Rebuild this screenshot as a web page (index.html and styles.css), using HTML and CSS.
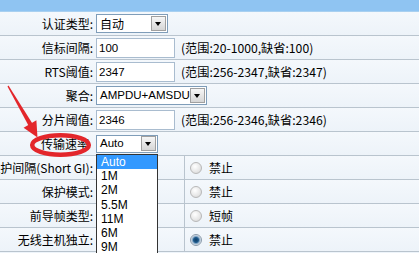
FILE: index.html
```html
<!DOCTYPE html>
<html>
<head>
<meta charset="utf-8">
<link rel="stylesheet" href="styles.css">
</head>
<body>
<div class="page">
  <div class="topbar"></div>
  <div class="row">
    <div class="label"><span>认证类型:</span></div>
    <div class="field"><div class="select s-auth"><span class="val cjk">自动</span><span class="btn"></span></div></div>
  </div>
  <div class="row">
    <div class="label"><span>信标间隔:</span></div>
    <div class="field"><div class="input">100</div><span class="hint">(范围:20-1000,缺省:100)</span></div>
  </div>
  <div class="row">
    <div class="label"><span>RTS阈值:</span></div>
    <div class="field"><div class="input">2347</div><span class="hint">(范围:256-2347,缺省:2347)</span></div>
  </div>
  <div class="row">
    <div class="label"><span>聚合:</span></div>
    <div class="field"><div class="select s-agg"><span class="val">AMPDU+AMSDU</span><span class="btn"></span></div></div>
  </div>
  <div class="row">
    <div class="label"><span>分片阈值:</span></div>
    <div class="field"><div class="input">2346</div><span class="hint">(范围:256-2346,缺省:2346)</span></div>
  </div>
  <div class="row">
    <div class="label label-nocolon"><span>传输速率</span></div>
    <div class="field"><div class="select s-rate"><span class="val">Auto</span><span class="btn"></span></div></div>
  </div>
  <div class="row radio-row">
    <div class="label"><span>保护间隔(Short GI):</span></div>
    <div class="mid"></div>
    <div class="opt"><span class="radio"></span><span class="opt-text">禁止</span></div>
  </div>
  <div class="row radio-row">
    <div class="label"><span>保护模式:</span></div>
    <div class="mid"></div>
    <div class="opt"><span class="radio"></span><span class="opt-text">禁止</span></div>
  </div>
  <div class="row radio-row">
    <div class="label"><span>前导帧类型:</span></div>
    <div class="mid"></div>
    <div class="opt"><span class="radio"></span><span class="opt-text">短帧</span></div>
  </div>
  <div class="row radio-row">
    <div class="label"><span>无线主机独立:</span></div>
    <div class="mid"></div>
    <div class="opt"><span class="radio checked"></span><span class="opt-text">禁止</span></div>
  </div>

  <ul class="listbox">
    <li class="sel">Auto</li>
    <li>1M</li>
    <li>2M</li>
    <li>5.5M</li>
    <li>11M</li>
    <li>6M</li>
    <li>9M</li>
  </ul>

  <svg class="mark" width="419" height="253" viewBox="0 0 419 253">
    <polygon points="8.5,85.6 7.5,86.4 28.6,125.8 32.4,123.6" fill="#e3262b"/>
    <polygon points="37.5,137.5 23.6,127.8 36.4,120.2" fill="#e3262b"/>
    <ellipse cx="60.5" cy="145" rx="28.3" ry="9.8" fill="none" stroke="#e3262b" stroke-width="4.5"/>
  </svg>
</div>
</body>
</html>
```

FILE: styles.css
```css
html, body {
  margin: 0;
  padding: 0;
  background: #eef4fa;
}
.page {
  position: relative;
  width: 419px;
  height: 253px;
  overflow: hidden;
  font-family: "Noto Sans CJK SC", "Liberation Sans", sans-serif;
  font-size: 12px;
  color: #000;
}
.topbar {
  height: 11px;
  background: #8fc4f2;
  border-bottom: 1px solid #a9d0f0;
}
.row {
  display: flex;
  align-items: center;
  height: 23px;
  border-bottom: 1px solid #b9c4ce;
  background: linear-gradient(#f4f8fc, #edf3f9);
}
.label {
  flex: 0 0 95px;
  width: 95px;
  box-sizing: border-box;
  padding-right: 2px;
  display: flex;
  justify-content: flex-end;
  overflow: hidden;
  white-space: nowrap;
  line-height: 23px;
}
.label span {
  flex: none;
}
.label-nocolon {
  padding-right: 6px;
}
.field {
  display: flex;
  align-items: center;
  padding-left: 1px;
}
.select {
  display: flex;
  align-items: center;
  box-sizing: border-box;
  height: 19px;
  background: #fff;
  border: 1px solid #7f9db9;
  padding: 1px;
}
.select .val {
  flex: 1;
  padding-left: 2px;
  font-family: "Liberation Sans", "Noto Sans CJK SC", sans-serif;
  font-size: 11.5px;
  line-height: 15px;
  white-space: nowrap;
  overflow: hidden;
}
.select .val.cjk {
  font-family: "Noto Sans CJK SC", sans-serif;
  font-size: 12px;
}
.select .btn {
  position: relative;
  flex: 0 0 15px;
  height: 15px;
  box-sizing: border-box;
  background: linear-gradient(#f6f6f6, #d6d6d6);
  border: 1px solid #a0a0a0;
}
.select .btn::after {
  content: "";
  position: absolute;
  left: 3px;
  top: 5px;
  border-left: 3.5px solid transparent;
  border-right: 3.5px solid transparent;
  border-top: 4px solid #000;
}
.s-auth { width: 72px; }
.s-agg { width: 111px; }
.s-rate { width: 62px; height: 18px; }
.input {
  box-sizing: border-box;
  width: 79px;
  height: 20px;
  background: #fff;
  border: 1px solid #a9bccf;
  padding-left: 2px;
  font-family: "Liberation Sans", sans-serif;
  font-size: 11.5px;
  line-height: 18px;
}
.hint {
  margin-left: 6px;
  white-space: nowrap;
  font-size: 12.2px;
}
.radio-row .mid {
  flex: 0 0 89px;
  height: 23px;
  border-right: 1px solid #b9c4ce;
}
.opt {
  display: flex;
  align-items: center;
  padding-left: 5px;
}
.radio {
  box-sizing: border-box;
  width: 12px;
  height: 12px;
  border-radius: 50%;
  border: 1px solid #b8b8b8;
  background: radial-gradient(circle at 40% 35%, #ffffff, #e6e6e6 60%, #cfcfcf);
}
.radio.checked {
  border-color: #8a9aaa;
  background: radial-gradient(circle at 50% 50%, #0d3c66 0, #1e5a8c 2.5px, #7fa3c3 3.5px, #e2e8ee 5px);
}
.opt-text {
  margin-left: 7px;
}
.listbox {
  position: absolute;
  left: 96px;
  top: 154px;
  width: 62px;
  box-sizing: border-box;
  margin: 0;
  padding: 0;
  list-style: none;
  background: #fff;
  border: 1px solid #333;
  font-family: "Liberation Sans", sans-serif;
  font-size: 12px;
}
.listbox li {
  height: 14.2px;
  line-height: 14px;
  padding-left: 4px;
}
.listbox li.sel {
  background: #3399ff;
  color: #fff;
}
.mark {
  position: absolute;
  left: 0;
  top: 0;
  pointer-events: none;
}
```
